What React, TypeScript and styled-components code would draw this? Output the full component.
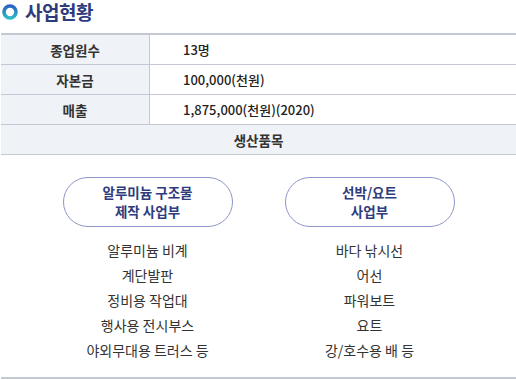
import styled, { createGlobalStyle } from 'styled-components'

const GlobalStyle = createGlobalStyle`
  html, body {
    margin: 0;
    padding: 0;
    background: #ffffff;
    font-family: 'Noto Sans CJK KR', 'Noto Sans', sans-serif;
  }
`

const COLORS = {
  navy: '#2e3b7c',
  line: '#c4c7d4',
  headBg: '#eff2f6',
  text: '#333333',
  pill: '#8e95c8',
}

const info = [
  { label: '종업원수', value: '13명' },
  { label: '자본금', value: '100,000(천원)' },
  { label: '매출', value: '1,875,000(천원)(2020)' },
]

const divisions = [
  {
    name: ['알루미늄 구조물', '제작 사업부'],
    items: ['알루미늄 비계', '계단발판', '정비용 작업대', '행사용 전시부스', '야외무대용 트러스 등'],
  },
  {
    name: ['선박/요트', '사업부'],
    items: ['바다 낚시선', '어선', '파워보트', '요트', '강/호수용 배 등'],
  },
]

const Wrapper = styled.div`
  width: 516px;
  padding-left: 1px;
  box-sizing: border-box;
`

const Title = styled.h2`
  display: flex;
  align-items: center;
  gap: 7px;
  margin: 0;
  height: 23px;
  line-height: 23px;
  font-size: 19px;
  font-weight: 700;
  color: ${COLORS.navy};
  letter-spacing: -0.5px;
  svg {
    flex: none;
    margin-left: 1px;
  }
`

const Table = styled.div`
  margin-top: 10px;
  border-top: 2px solid ${COLORS.line};
  border-bottom: 2px solid ${COLORS.line};
`

const Row = styled.div`
  display: grid;
  grid-template-columns: 149px 1fr;
  height: 29px;
  border-bottom: 1.5px solid ${COLORS.line};
`

const Head = styled.div<{ $full?: boolean }>`
  display: flex;
  align-items: center;
  justify-content: center;
  background: ${COLORS.headBg};
  font-size: 13.5px;
  font-weight: 700;
  color: ${COLORS.text};
  border-right: ${({ $full }) => ($full ? 'none' : `1.5px solid ${COLORS.line}`)};
  grid-column: ${({ $full }) => ($full ? '1 / -1' : 'auto')};
`

const Value = styled.div`
  display: flex;
  align-items: center;
  padding-left: 33px;
  font-size: 13px;
  font-weight: 500;
  color: #222222;
`

const Products = styled.div`
  display: grid;
  grid-template-columns: 222px 222px;
  justify-content: center;
  padding: 22px 0 14px;
`

const Division = styled.div`
  display: flex;
  flex-direction: column;
  align-items: center;
`

const Pill = styled.div`
  width: 170px;
  height: 50px;
  box-sizing: border-box;
  border: 1px solid ${COLORS.pill};
  border-radius: 25px;
  display: flex;
  flex-direction: column;
  align-items: center;
  justify-content: center;
  font-size: 13.5px;
  font-weight: 700;
  line-height: 19px;
  color: ${COLORS.navy};
  margin-bottom: 11px;
`

const Item = styled.div`
  height: 25px;
  line-height: 25px;
  font-size: 14px;
  color: ${COLORS.text};
  text-align: center;
`

function Ring() {
  return (
    <svg width="16" height="16" viewBox="0 0 16 16">
      <defs>
        <linearGradient id="ring" x1="0" y1="0" x2="0" y2="1">
          <stop offset="0" stopColor="#2a63c0" />
          <stop offset="1" stopColor="#2fb9c8" />
        </linearGradient>
      </defs>
      <circle cx="8" cy="8" r="6" fill="none" stroke="url(#ring)" strokeWidth="3.6" />
    </svg>
  )
}

export default function App() {
  return (
    <Wrapper>
      <GlobalStyle />
      <Title><Ring />사업현황</Title>
      <Table>
        {info.map((row) => (
          <Row key={row.label}>
            <Head>{row.label}</Head>
            <Value>{row.value}</Value>
          </Row>
        ))}
        <Row>
          <Head $full>생산품목</Head>
        </Row>
        <Products>
          {divisions.map((d) => (
            <Division key={d.name.join()}>
              <Pill>
                {d.name.map((n) => <span key={n}>{n}</span>)}
              </Pill>
              {d.items.map((it) => <Item key={it}>{it}</Item>)}
            </Division>
          ))}
        </Products>
      </Table>
    </Wrapper>
  )
}
